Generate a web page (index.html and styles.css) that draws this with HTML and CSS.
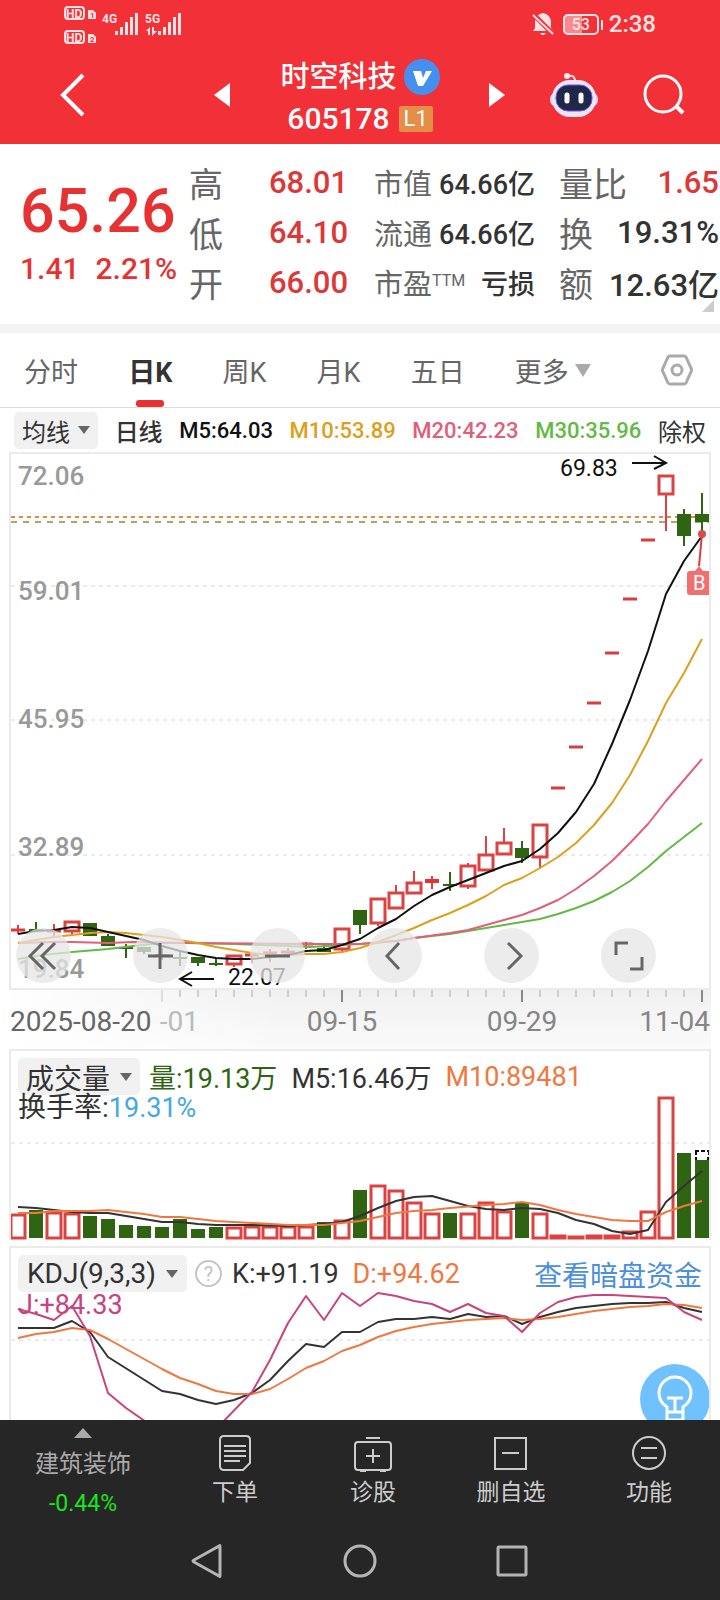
FILE: index.html
```html
<!DOCTYPE html>
<html lang="zh-CN">
<head>
<meta charset="utf-8">
<meta name="viewport" content="width=device-width, initial-scale=1">
<title>时空科技 605178</title>
<link rel="stylesheet" href="styles.css">
</head>
<body>
<div class="status">
  <svg class="status-left" width="120" height="38" viewBox="62 4 120 38" aria-hidden="true">
    <g fill="none" stroke="#ffe3e3" stroke-width="2"><rect x="65" y="7" width="19" height="12" rx="3"/><rect x="65" y="31" width="19" height="12" rx="3"/></g>
    <g fill="#ffe3e3">
      <text class="hd" x="66" y="18">HD</text><text class="hd" x="66" y="42">HD</text>
      <path d="M88 10h5l3 3v6h-8zM88 34h5l3 3v6h-8z"/>
      <text class="net" x="102" y="23">4G</text><text class="net" x="145" y="23">5G</text>
      <path d="M115 31h3v4h-3zM120 27h3v8h-3zM125 22h3v13h-3zM130 17h3v18h-3zM135 13h3v22h-3zM158 31h3v4h-3zM163 27h3v8h-3zM168 22h3v13h-3zM173 17h3v18h-3zM178 13h3v22h-3z"/>
      <path d="M146 31l4-4v8h-2v-4zM152 27h2v4h3l-5 5z"/>
    </g>
    <g fill="#f23038"><text class="sim" x="90" y="18">1</text><text class="sim" x="90" y="42">2</text></g>
  </svg>
  <div class="status-right">
    <svg width="22" height="24" viewBox="0 0 22 24" aria-hidden="true"><path d="M11 1a9 9 0 0 1 8 9v6l2 3H1l2-3v-6a9 9 0 0 1 8-9zM8 21h6l-2 2h-2z" fill="#ffe3e3"/><path d="M0 1l21 21" stroke="#f23038" stroke-width="5"/><path d="M1 3l20 19" stroke="#ffe3e3" stroke-width="2"/></svg>
    <span class="battery">53</span>
    <time>2:38</time>
  </div>
</div>
<header class="top">
  <button class="back" aria-label="返回"><svg width="26" height="44" viewBox="0 0 26 44"><path d="M23 2L3 22l20 20" fill="none" stroke="#fff" stroke-width="4"/></svg></button>
  <button aria-label="上一只"><svg width="16" height="24" viewBox="0 0 16 24"><path d="M16 0v24L0 12z" fill="#fff"/></svg></button>
  <div class="title">
    <h1>时空科技 <svg width="36" height="36" viewBox="0 0 36 36" aria-hidden="true"><circle cx="18" cy="18" r="18" fill="#4590ee"/><path d="M9 12h8l2 7 3-7h6l-9 15h-5z" fill="#fff"/></svg></h1>
    <p>605178 <span class="level">L1</span></p>
  </div>
  <button aria-label="下一只"><svg width="16" height="24" viewBox="0 0 16 24"><path d="M0 0v24l16-12z" fill="#fff"/></svg></button>
  <button aria-label="助手"><svg width="50" height="46" viewBox="0 0 50 46">
    <path d="M26 9q0-6-6-5" fill="none" stroke="#f8dce6" stroke-width="2"/><circle cx="18" cy="4" r="3" fill="#ffe9ef"/>
    <rect x="1" y="20" width="48" height="15" rx="7" fill="#dcd5f5"/><rect x="3" y="8" width="44" height="37" rx="18" fill="#e9e5fb"/>
    <rect x="7" y="13" width="36" height="26" rx="12" fill="#20284a" stroke="#7a55d6" stroke-width="1"/><path d="M18 23v6M32 23v6" stroke="#fff" stroke-width="5" stroke-linecap="round"/></svg></button>
  <button aria-label="搜索"><svg width="42" height="42" viewBox="0 0 42 42"><g fill="none" stroke="#fff" stroke-width="3"><circle cx="20" cy="20" r="18"/><path d="M33 32l7 7" stroke-width="4"/></g></svg></button>
</header>

<main>
<section class="quote">
  <div class="price"><strong>65.26</strong><p><span>1.41</span><span>2.21%</span></p></div>
  <dl class="big red"><div><dt>高</dt><dd>68.01</dd></div><div><dt>低</dt><dd>64.10</dd></div><div><dt>开</dt><dd>66.00</dd></div></dl>
  <dl class="small"><div><dt>市值</dt><dd>64.66亿</dd></div><div><dt>流通</dt><dd>64.66亿</dd></div><div><dt>市盈<sup>TTM</sup></dt><dd>亏损</dd></div></dl>
  <dl class="big last"><div><dt>量比</dt><dd class="up">1.65</dd></div><div><dt>换</dt><dd>19.31%</dd></div><div><dt>额</dt><dd>12.63亿</dd></div></dl>
</section>

<nav class="tabs">
  <button>分时</button><button class="active">日K</button><button>周K</button><button>月K</button><button>五日</button>
  <button class="more">更多<svg width="16" height="13" viewBox="0 0 16 13"><path d="M0 0h16L8 13z" fill="#aaa"/></svg></button>
  <button class="gear" aria-label="设置"><svg width="32" height="32" viewBox="0 0 32 32"><g fill="none" stroke="#aaa" stroke-width="3"><path d="M9 2h14q1 0 2 1l5 11q1 2 0 4l-5 11q-1 1-2 1H9q-1 0-2-1L2 18q-1-2 0-4L7 3q1-1 2-1z"/><circle cx="16" cy="16" r="5"/></g></svg></button>
</nav>

<div class="averages">
  <button class="pill">均线<i class="caret"></i></button>
  <span class="dark cjk strong">日线</span><span class="black">M5:64.03</span><span class="gold">M10:53.89</span><span class="pink">M20:42.23</span><span class="green">M30:35.96</span><span class="dark cjk">除权</span>
</div>

<section class="panel kline">
  <svg class="chart" viewBox="11 454 698 534" role="img" aria-label="日K线">
    <path class="grid" d="M11 586H709M11 720H709M11 855H709"/>
    <g class="scale"><text x="18" y="485">72.06</text><text x="18" y="600">59.01</text><text x="18" y="728">45.95</text><text x="18" y="856">32.89</text><text x="18" y="978">19.84</text></g>
    <path d="M11 517H709" stroke="#e08a3c" stroke-width="2" stroke-dasharray="4 4"/>
    <path d="M11 522H709" stroke="#b5a36c" stroke-width="2" stroke-dasharray="6 6"/>
    <path class="hollow" d="M65 922h14v9h-14zM227 956h14v8h-14zM335 929h14v20h-14zM371 899h14v24h-14zM389 893h14v15h-14zM407 883h14v10h-14zM461 866h14v20h-14zM479 855h14v15h-14zM497 843h14v11h-14zM533 825h14v32h-14zM659 476h14v18h-14z"/>
    <path class="wick" d="M18 925v9M54 924v13M72 931v4M234 964v3M252 953v10M270 949v13M288 948v6M306 942v7M342 949v2M378 923v3M396 885v8M414 871v12M432 876v13M468 863v3M468 886v3M486 836v19M504 828v15M540 857v11M666 494v37"/>
    <path d="M11 930h14M47 931h14M245 955h14M263 953h14M281 952h14M299 944h14M551 788h14M569 747h14M587 703h14M605 653h14M623 599h14M641 540h14" stroke="#d93c3c" stroke-width="3"/>
    <path d="M425 881h14" stroke="#e03434" stroke-width="4"/>
    <path class="solid" d="M83 923h14v13h-14zM101 936h14v10h-14zM137 947h14v5h-14zM191 957h14v6h-14zM317 948h14v4h-14zM353 910h14v15h-14zM515 848h14v10h-14zM677 514h14v22h-14zM695 514h14v8h-14z"/>
    <path class="greenline" d="M29 930h14M36 922v8M108 934v2M119 948h14M126 944v14M144 952v2M155 955h14M162 948v12M173 958h14M180 952v14M198 963v3M209 964h14M216 958v8M324 943v5M360 925v9M443 885h14M450 872v19M522 841v22M684 509v37M702 493v39"/>
    <polyline class="line" stroke="#63b945" points="18,959 43,955 72,952 108,949 133,946 162,943 187,943 234,944 288,946 310,947 360,944 396,941 414,938 432,936 450,934 486,928 504,925 522,922 540,919 558,914 576,908 594,901 612,892 630,881 648,867 666,851 684,837 702,823"/>
    <polyline class="line" stroke="#e0607a" points="18,943 54,942 72,942 108,943 133,942 187,943 306,944 360,944 396,941 414,938 450,933 468,930 486,925 504,920 522,915 540,908 558,900 576,889 594,876 612,861 630,843 648,824 666,801 684,780 702,759"/>
    <polyline class="line" stroke="#dda01c" points="18,943 36,940 54,937 72,935 90,933 108,932 126,933 144,935 162,937 180,940 198,943 216,947 234,950 252,953 270,955 288,955 306,954 324,954 342,952 360,948 378,942 396,935 414,928 432,920 450,913 468,905 486,896 504,885 522,878 540,868 558,857 576,843 594,825 612,803 630,775 648,741 666,703 684,673 702,639"/>
    <polyline class="line" stroke="#111" points="18,934 36,931 54,930 72,927 90,928 108,932 126,936 144,940 162,946 180,951 198,955 216,958 234,959 252,959 270,957 288,955 306,951 324,950 342,945 360,939 378,928 396,919 414,906 432,895 450,887 468,880 486,873 504,866 522,861 540,849 558,833 576,812 594,784 612,744 630,700 648,651 666,594 684,561 702,536"/>
    <g class="mark"><text x="560" y="476">69.83</text><text x="228" y="985">22.07</text></g>
    <path d="M632 463h33M654 456l12 7-12 6M214 979h-33M192 972l-12 7 12 7" fill="none" stroke="#111" stroke-width="2"/>
    <path d="M702 534l-3 32" stroke="#dc3a3a" stroke-width="2"/><circle cx="702" cy="534" r="4" fill="#dc4b4b"/>
    <path d="M695 571l4-5 4 5h6v24h-19q-3 0-3-3v-18q0-3 3-3z" fill="#f07070"/>
    <text class="buy" x="693" y="590">B</text>
  </svg>
  <div class="tools">
    <button aria-label="最左"><svg viewBox="0 0 55 55"><path d="M27 15L14 28l13 13M39 15L26 28l13 13"/></svg></button>
    <button aria-label="放大"><svg viewBox="0 0 55 55"><path d="M15 28h25M27 15v26"/></svg></button>
    <button aria-label="缩小"><svg viewBox="0 0 55 55"><path d="M15 28h25"/></svg></button>
    <button aria-label="左移"><svg viewBox="0 0 55 55"><path d="M32 15L20 28l12 13"/></svg></button>
    <button aria-label="右移"><svg viewBox="0 0 55 55"><path d="M24 15l13 13-13 13"/></svg></button>
    <button aria-label="全屏"><svg viewBox="0 0 55 55"><path d="M15 27V15h12M41 29v12H29"/></svg></button>
  </div>
</section>
<div class="axis">
  <svg class="chart" viewBox="0 990 720 59" role="img" aria-label="日期轴">
    <path d="M180 990v7M198 990v7M216 990v7M234 990v7M252 990v7M270 990v7M288 990v7M306 990v7M324 990v7M360 990v7M378 990v7M396 990v7M414 990v7M432 990v7M450 990v7M468 990v7M486 990v7M504 990v7M540 990v7M558 990v7M576 990v7M594 990v7M612 990v7M630 990v7M648 990v7M666 990v7M684 990v7" stroke="#aaa"/>
    <path d="M342 990v12M522 990v12M702 990v12" stroke="#888" stroke-width="2"/><path d="M162 990v12" stroke="#ddd" stroke-width="2"/>
    <g class="dates"><text x="10" y="1031" fill="#666">2025-08-20</text><text x="199" y="1031" text-anchor="end" fill="#bbb">-01</text><text x="342" y="1031" text-anchor="middle">09-15</text><text x="522" y="1031" text-anchor="middle">09-29</text><text x="710" y="1031" text-anchor="end">11-04</text></g>
  </svg>
</div>

<section class="panel volume">
  <svg class="chart" viewBox="11 1051 698 189" role="img" aria-label="成交量">
    <path class="grid" d="M11 1143H709"/>
    <path class="hollow" d="M11 1238v-23h14v23zM47 1238v-25h14v25zM65 1238v-24h14v24zM227 1238v-10h14v10zM245 1238v-11h14v11zM263 1238v-11h14v11zM281 1238v-11h14v11zM299 1238v-11h14v11zM335 1238v-17h14v17zM371 1238v-52h14v52zM389 1238v-47h14v47zM407 1238v-35h14v35zM425 1238v-24h14v24zM461 1238v-24h14v24zM479 1238v-35h14v35zM497 1238v-26h14v26zM533 1238v-24h14v24zM551 1238v-2h14v2zM569 1238v-1h14v1zM587 1238v-2h14v2zM605 1238v-2h14v2zM623 1238v-6h14v6zM641 1238v-26h14v26zM659 1238v-140h14v140z"/>
    <path class="solid" d="M29 1238v-28h14v28zM83 1238v-22h14v22zM101 1238v-19h14v19zM119 1238v-13h14v13zM137 1238v-12h14v12zM155 1238v-11h14v11zM173 1238v-19h14v19zM191 1238v-9h14v9zM209 1238v-11h14v11zM317 1238v-16h14v16zM353 1238v-48h14v48zM443 1238v-25h14v25zM515 1238v-35h14v35zM677 1238v-85h14v85zM695 1238v-78h14v78z"/>
    <path d="M696 1155v-4h3M701 1151h4M707 1151h2v4M696 1157v3M708 1157v3" fill="none" stroke="#111" stroke-width="2"/>
    <polyline class="line" stroke="#333" points="18,1207 36,1208 54,1210 72,1212 90,1213 108,1213 126,1216 144,1219 162,1222 180,1222 198,1224 216,1225 252,1225 288,1226 306,1225 324,1224 342,1222 360,1216 378,1208 396,1201 414,1197 432,1196 450,1201 468,1206 486,1209 504,1210 522,1208 540,1209 558,1213 576,1220 594,1224 612,1231 630,1234 648,1230 666,1202 684,1186 702,1171"/>
    <polyline class="line" stroke="#f07840" points="18,1213 36,1213 54,1211 90,1211 108,1210 126,1212 144,1214 162,1217 180,1217 216,1221 252,1223 288,1225 324,1225 342,1223 360,1221 378,1217 396,1213 414,1211 432,1210 450,1208 486,1205 504,1204 522,1202 540,1205 558,1210 576,1214 612,1220 630,1221 648,1221 666,1212 684,1206 702,1201"/>
  </svg>
  <div class="legend">
    <div class="row"><button class="pill">成交量<i class="caret"></i></button><span class="forest">量:19.13万</span><span>M5:16.46万</span><span class="orange">M10:89481</span></div>
    <p class="sub"><span class="name">换手率:</span><span class="sky">19.31%</span></p>
  </div>
</section>

<section class="panel kdj">
  <svg class="chart" viewBox="11 1248 698 172" role="img" aria-label="KDJ">
    <path class="grid" d="M11 1340H709"/>
    <polyline class="line" stroke="#333" points="18,1328 54,1328 72,1321 90,1332 108,1357 162,1391 180,1394 198,1400 216,1404 234,1400 252,1393 270,1380 288,1361 306,1344 324,1347 342,1332 360,1332 378,1322 396,1319 414,1319 432,1317 450,1319 468,1314 486,1317 504,1316 522,1324 540,1317 558,1312 576,1308 594,1306 612,1304 630,1303 648,1303 666,1302 684,1308 702,1312"/>
    <polyline class="line" stroke="#f07840" points="18,1338 36,1334 54,1332 72,1328 90,1330 108,1339 126,1349 144,1359 162,1369 180,1378 198,1384 216,1391 234,1394 252,1394 270,1389 288,1379 306,1368 324,1361 342,1351 360,1345 378,1337 396,1331 414,1327 432,1324 450,1322 468,1320 504,1318 522,1320 540,1319 558,1317 576,1314 594,1311 612,1309 630,1307 648,1306 666,1304 684,1305 702,1308"/>
    <polyline class="line" stroke="#c8437f" points="18,1309 36,1314 54,1320 72,1306 90,1336 108,1393 126,1408 152,1426 216,1429 252,1392 270,1360 288,1323 306,1296 324,1320 342,1293 360,1306 378,1293 396,1296 414,1301 432,1304 450,1312 468,1304 486,1313 504,1316 522,1332 540,1313 558,1302 576,1297 594,1295 612,1295 648,1297 666,1298 684,1312 702,1320"/>
  </svg>
  <div class="legend">
    <div class="row"><button class="pill">KDJ(9,3,3)<i class="caret"></i></button><button class="help" aria-label="说明">?</button><span>K:+91.19</span><span class="orange">D:+94.62</span><a href="#">查看暗盘资金</a></div>
    <p class="sub magenta">J:+84.33</p>
  </div>
  <button class="idea" aria-label="提示"><svg width="70" height="70" viewBox="0 0 70 70"><g fill="none" stroke="#fff" stroke-width="3"><path d="M27 48v-5q-8-5-8-14a16 16 0 0 1 32 0q0 9-8 14v13H27v-8h16M27 34h16M35 34v14"/></g></svg></button>
</section>
</main>

<footer class="bottom">
  <nav class="actions">
    <button class="sector"><svg width="18" height="10" viewBox="0 0 18 10"><path d="M9 0l9 10H0z" fill="#aaa"/></svg><span>建筑装饰</span><b>-0.44%</b></button>
    <button><svg width="40" height="40" viewBox="0 0 40 40"><path d="M9 3h22q4 0 4 4v23l-7 7H9q-4 0-4-4V7q0-4 4-4zM9 13h22M9 18h22M9 23h22M9 28h16"/></svg>下单</button>
    <button><svg width="40" height="40" viewBox="0 0 40 40"><path d="M13 5h14M5 9h30q3 0 3 3v22q0 3-3 3H5q-3 0-3-3V12q0-3 3-3zM7 38h6M27 38h6M20 16v14M13 23h14"/></svg>诊股</button>
    <button><svg width="40" height="40" viewBox="0 0 40 40"><path d="M4 5h31v31H4zM11 20h17"/></svg>删自选</button>
    <button><svg width="40" height="40" viewBox="0 0 40 40"><circle cx="20" cy="20" r="16"/><path d="M12 15h16M12 25h16"/></svg>功能</button>
  </nav>
  <div class="system">
    <button aria-label="返回"><svg width="36" height="36" viewBox="0 0 36 36"><path d="M30 3v30q0 1-1 0L4 19q-2-1 0-2L29 3q1-1 1 0z"/></svg></button>
    <button aria-label="主页"><svg width="36" height="36" viewBox="0 0 36 36"><circle cx="18" cy="18" r="15"/></svg></button>
    <button aria-label="最近"><svg width="36" height="36" viewBox="0 0 36 36"><rect x="4" y="4" width="28" height="28" rx="1"/></svg></button>
  </div>
</footer>
</body>
</html>
```
FILE: styles.css
```css
* { box-sizing: border-box; }
body {
  margin: 0;
  min-height: 100vh;
  display: flex;
  flex-direction: column;
  background: #fff;
  color: #333;
  font-family: Roboto, "Noto Sans CJK SC", sans-serif;
}
button {
  margin: 0;
  padding: 0;
  border: 0;
  background: none;
  color: inherit;
  font: inherit;
}
svg { display: block; flex: none; }
h1, p, dl, dd { margin: 0; }

.status {
  height: 46px;
  padding: 4px 64px 0 62px;
  display: flex;
  justify-content: space-between;
  background: #f23038;
  color: #ffe3e3;
}
.status-left { overflow: visible; }
.hd { font-size: 12px; font-weight: 700; }
.net { font-size: 12px; font-weight: 700; }
.sim { font-size: 8px; font-weight: 700; }
.status-right { display: flex; align-items: center; gap: 9px; height: 40px; font-size: 24px; font-weight: 500; }
.status-right time { margin-left: 1px; }
.battery {
  position: relative;
  width: 36px;
  height: 21px;
  border: 2px solid #ffe3e3;
  border-radius: 5px;
  background: linear-gradient(90deg, #f78a8e 52%, transparent 52%);
  font-size: 16px;
  line-height: 17px;
  text-align: center;
}
.battery::after { content: ""; position: absolute; right: -6px; top: 4px; width: 2px; height: 10px; background: #ffe3e3; }

.top {
  height: 98px;
  display: grid;
  grid-template-columns: 184fr 76fr 194fr 86fr 68fr 112fr;
  align-items: center;
  background: #f23038;
  color: #fff;
}
.top button { display: flex; justify-content: center; }
.top .back { justify-content: flex-start; padding-left: 60px; }
.title { display: flex; flex-direction: column; align-items: center; gap: 2px; padding: 6px 0 0 6px; }
.title h1 { display: flex; align-items: center; gap: 7px; font-size: 29px; font-weight: 500; line-height: 40px; white-space: nowrap; }
.title p { display: flex; align-items: center; gap: 9px; font-size: 30px; font-weight: 500; line-height: 40px; }
.level { width: 34px; height: 26px; border-radius: 2px; background: #e48e48; font-size: 22px; font-weight: 400; line-height: 26px; text-align: center; }

.quote {
  position: relative;
  display: grid;
  grid-template-columns: 169fr 159fr 187fr 185fr;
  padding: 13px 0 17px 20px;
  border-bottom: 9px solid #f4f4f4;
}
.quote::after { content: ""; position: absolute; right: 6px; bottom: 12px; border-style: solid; border-width: 0 0 12px 12px; border-color: transparent transparent #ccc transparent; }
.price { color: #e63232; white-space: nowrap; }
.price strong { display: block; padding-top: 16px; font-size: 61px; font-weight: 500; line-height: 76px; }
.price p { display: flex; gap: 16px; font-size: 30px; font-weight: 500; line-height: 40px; }
.quote dl div { display: flex; align-items: center; justify-content: space-between; height: 50px; white-space: nowrap; }
.quote dt { color: #666; }
.quote dd { font-weight: 500; }
.big { font-size: 31px; }
.big dt { font-size: 34px; }
.red dd, .quote .up { color: #dc3838; }
.small { padding-left: 26px; font-size: 27px; }
.small dt { font-size: 29px; }
.small sup { font-size: 16px; line-height: 16px; vertical-align: 9px; }
.last { padding-left: 24px; padding-right: 1px; }

.tabs { display: flex; justify-content: space-between; align-items: stretch; height: 75px; padding: 0 27px 0 24px; border-bottom: 1px solid #ddd; color: #666; font-size: 27px; }
.tabs button { position: relative; }
.tabs .active { color: #333; font-weight: 700; }
.tabs .active::after { content: ""; position: absolute; left: 50%; bottom: 0; width: 28px; height: 7px; margin-left: -14px; border-radius: 3px; background: #e63232; }
.tabs .more { display: flex; align-items: center; gap: 6px; }
.tabs .gear { margin-left: 20px; }

.averages { display: flex; justify-content: space-between; align-items: center; height: 44px; padding: 0 14px; font-size: 22px; white-space: nowrap; }
.cjk, .averages .pill { font-size: 24px; }
.averages span { font-weight: 500; }
.averages .cjk { font-weight: 400; }
.averages .strong { font-weight: 500; }
.pill { display: inline-flex; align-items: center; gap: 10px; height: 37px; padding: 0 9px; border-radius: 5px; background: #f1f1f1; color: #333; }
.averages .pill { gap: 8px; padding: 0 8px; }
.caret { border-style: solid; border-width: 8px 6px 0; border-color: #666 transparent transparent; }
.dark { color: #333; }
.black { color: #111; }
.gold { color: #dda01c; }
.pink { color: #e0607a; }
.green { color: #63b945; }
.forest { color: #2f6512; }
.orange { color: #f07840; }
.sky { color: #45a7e6; }
.magenta { color: #c8437f; }

.panel { position: relative; display: grid; margin: 0 9px; border: 2px solid #ebebeb; }
.panel > .chart, .legend { grid-area: 1 / 1; }
.chart { width: 100%; height: auto; }
.grid { stroke: #d8d8d8; stroke-dasharray: 4 4; }
.scale { fill: #999; font-size: 26px; font-weight: 500; }
.mark { fill: #111; font-size: 23px; }
.buy { fill: #fff; font-size: 20px; }
.line { fill: none; stroke-width: 2; stroke-linejoin: round; }
.hollow { fill: none; stroke: #dc4242; stroke-width: 3; }
.wick { stroke: #dc4242; stroke-width: 2; }
.solid { fill: #2f6512; }
.greenline { stroke: #2f6512; stroke-width: 2; }
.tools { position: absolute; left: 5px; right: 53px; bottom: 5px; display: flex; justify-content: space-between; }
.tools button { width: 55px; height: 55px; border-radius: 50%; background: rgba(230, 230, 230, 0.75); }
.tools path { fill: none; stroke: #666; stroke-width: 3; }
.axis { margin-right: 9px; background: linear-gradient(90deg, #fff, transparent 40%), linear-gradient(#f0f0f0, #fbfbfb); }
.axis .chart { width: calc(100% + 9px); }
.dates { fill: #858585; font-size: 28px; }

.legend { padding: 7px; font-size: 27px; }
.row { display: flex; align-items: center; gap: 14px; height: 37px; white-space: nowrap; }
.row .pill { font-size: 28px; }
.volume { border-bottom: 0; margin-bottom: 6px; }
.volume .row .pill { padding: 0 8px; margin-right: -5px; }
.sub { padding-top: 1px; line-height: 24px; }
.name { font-size: 28px; }
.kdj { overflow: hidden; border-bottom: 0; }
.row a { margin-left: auto; color: #4c8fdc; font-size: 28px; text-decoration: none; }
.help { width: 27px; height: 27px; margin: 0 -4px 0 -6px; border: 2px solid #c4c4c4; border-radius: 50%; color: #c4c4c4; font-size: 20px; line-height: 22px; }
.idea { position: absolute; right: -1px; bottom: -14px; width: 70px; height: 70px; border-radius: 50%; background: #70c2ff; }

.bottom { margin-top: auto; background: #262626; color: #ccc; }
.actions { display: grid; grid-template-columns: 166fr repeat(4, 138fr); height: 100px; padding-right: 2px; font-size: 23px; }
.actions button { display: flex; flex-direction: column; align-items: center; padding-top: 13px; line-height: 40px; }
.actions button > svg { fill: none; stroke: #ccc; stroke-width: 2; }
.actions .sector { padding-top: 8px; color: #aaa; font-size: 24px; }
.actions .sector > svg { stroke: none; margin-bottom: 6px; }
.sector b { color: #18e818; font-size: 23px; font-weight: 400; }
.system { display: flex; justify-content: center; gap: 116px; height: 80px; padding-top: 23px; }
.system svg { fill: none; stroke: #b4b4b4; stroke-width: 3; }
.system button { align-self: flex-start; }
```
